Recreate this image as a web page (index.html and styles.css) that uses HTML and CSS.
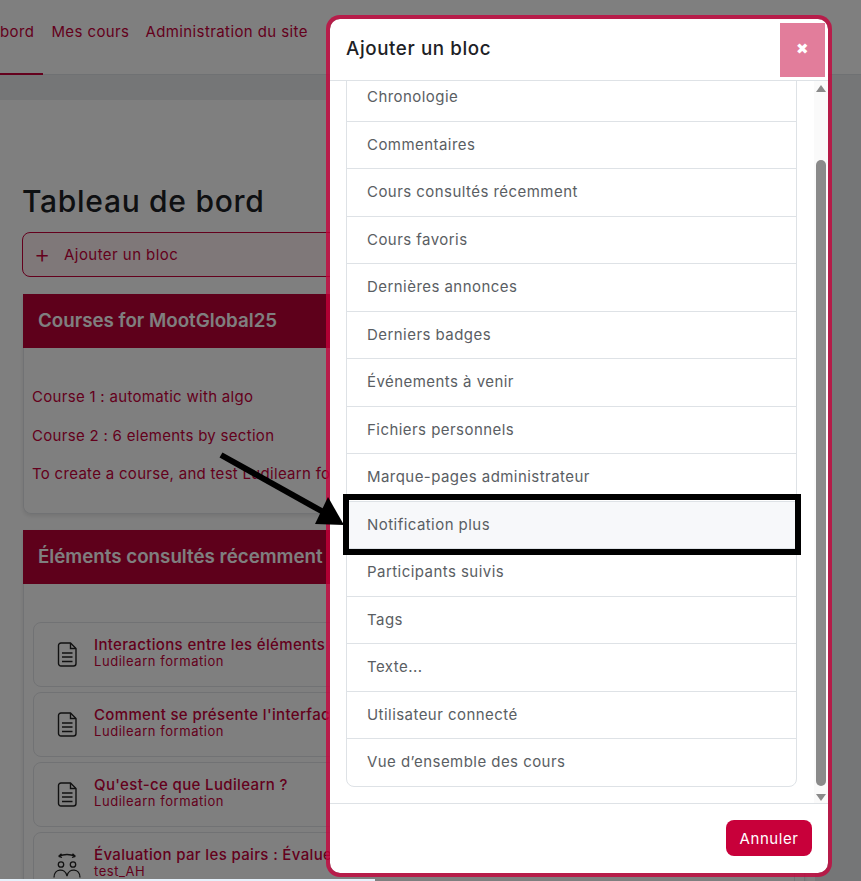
FILE: index.html
```html
<!DOCTYPE html>
<html lang="fr">
<head>
    <meta charset="UTF-8">
    <meta name="viewport" content="width=device-width, initial-scale=1.0">
    <title>Tableau de bord</title>
    <link rel="stylesheet" href="styles.css">
</head>
<body>
<div class="page">
    <nav class="topnav">
        <a class="active">bord</a>
        <a>Mes cours</a>
        <a>Administration du site</a>
    </nav>

    <main class="content">
        <h1>Tableau de bord</h1>
        <div class="add-block"><span class="plus">+</span>Ajouter un bloc</div>

        <section class="card">
            <h2>Courses for MootGlobal25</h2>
            <div class="card-text">
                <p>Course 1 : automatic with algo</p>
                <p>Course 2 : 6 elements by section</p>
                <p>To create a course, and test Ludilearn for</p>
            </div>
        </section>

        <section class="card">
            <h2>Éléments consultés récemment</h2>
            <div class="recent">
                <div class="recent-item">
                    <svg class="doc" viewBox="0 0 20 25"><use href="#doc-icon"/></svg>
                    <div><div class="recent-title">Interactions entre les éléments de jeu</div><div class="recent-sub">Ludilearn formation</div></div>
                </div>
                <div class="recent-item">
                    <svg class="doc" viewBox="0 0 20 25"><use href="#doc-icon"/></svg>
                    <div><div class="recent-title">Comment se présente l'interface</div><div class="recent-sub">Ludilearn formation</div></div>
                </div>
                <div class="recent-item">
                    <svg class="doc" viewBox="0 0 20 25"><use href="#doc-icon"/></svg>
                    <div><div class="recent-title">Qu'est-ce que Ludilearn ?</div><div class="recent-sub">Ludilearn formation</div></div>
                </div>
                <div class="recent-item">
                    <svg class="peers" viewBox="0 0 28 30" fill="none" stroke="#222" stroke-width="1.300">
                        <path d="M5.500 6.500Q14 2.500 22.500 6.500M5.500 6.500l3-2.800M5.500 6.500l3.500 1M22.500 6.500l-3-2.800M22.500 6.500l-3.500 1"/>
                        <circle cx="8" cy="14.500" r="2.700"/>
                        <circle cx="20" cy="14.500" r="2.700"/>
                        <path d="M1 27.500c0-9 11-10 13-1.500 2-8.500 13-7.500 13 1.500"/>
                    </svg>
                    <div><div class="recent-title">Évaluation par les pairs : Évaluer</div><div class="recent-sub">test_AH</div></div>
                </div>
            </div>
        </section>
    </main>
</div>

<svg class="defs" width="0" height="0">
    <symbol id="doc-icon" viewBox="0 0 20 25">
        <path d="M4 1h9.500l5.500 5.500v15a2.500 2.500 0 0 1-2.500 2.500h-12.500a2.500 2.500 0 0 1-2.500-2.500v-18a2.500 2.500 0 0 1 2.500-2.500z" fill="none" stroke="#222" stroke-width="1.400"/>
        <path d="M13.500 1v5.500h5.500M5 11h10.500M5 15h10.500M5 19.500h10.500" fill="none" stroke="#222" stroke-width="1.400"/>
    </symbol>
</svg>

<div class="backdrop"></div>
<div class="status-strip"></div>

<div class="modal">
    <div class="modal-head">
        <h3>Ajouter un bloc</h3>
        <div class="close">&#10006;</div>
    </div>
    <div class="modal-body">
        <ul class="block-list">
            <li>Chronologie</li>
            <li>Commentaires</li>
            <li>Cours consultés récemment</li>
            <li>Cours favoris</li>
            <li>Dernières annonces</li>
            <li>Derniers badges</li>
            <li>Événements à venir</li>
            <li>Fichiers personnels</li>
            <li>Marque-pages administrateur</li>
            <li class="hover">Notification plus</li>
            <li>Participants suivis</li>
            <li>Tags</li>
            <li>Texte...</li>
            <li>Utilisateur connecté</li>
            <li>Vue d’ensemble des cours</li>
        </ul>
        <div class="scrollbar">
            <span class="arrow-up"></span>
            <span class="thumb"></span>
            <span class="arrow-down"></span>
        </div>
    </div>
    <div class="modal-foot">
        <button>Annuler</button>
    </div>
</div>

<!-- annotation on top of the screenshot -->
<div class="highlight"></div>
<svg class="pointer" width="861" height="881" viewBox="0 0 861 881">
    <line x1="221" y1="455" x2="325" y2="513" stroke="#000" stroke-width="6"/>
    <polygon points="328,497 315,524 344,525" fill="#000"/>
</svg>
</body>
</html>
```

FILE: styles.css
```css
* {
    box-sizing: border-box;
}
body {
    margin: 0;
    height: 881px;
    overflow: hidden;
    font-family: Inter, "Open Sans", sans-serif;
    font-size: 15px;
    letter-spacing: 0.55px;
    position: relative;
    background-color: #eaecef;
    color: #c8003a;
}
.defs {
    position: absolute;
}
.topnav {
    display: flex;
    height: 75px;
    background-color: #fff;
    border-bottom: 1px solid #dee2e6;
    letter-spacing: 0.4px;
}
.topnav a {
    padding: 22px 8px 0 8px;
    height: 75px;
    line-height: 20px;
}
.topnav a.active {
    padding: 22px 9px 0 0;
    border-bottom: 2px solid #c8003a;
}
.content {
    width: 815px;
    margin-top: 25px;
    padding: 69px 10px 0 22px;
    background-color: #fff;
}
h1 {
    margin: 0;
    height: 63px;
    padding-top: 14px;
    font-size: 30px;
    line-height: 36px;
    font-weight: 500;
    letter-spacing: 0.7px;
    color: #1d2125;
}
.add-block {
    height: 45px;
    margin-bottom: 17px;
    border: 1px solid #c8003a;
    border-radius: 8px;
    background-color: #fff0f2;
    line-height: 43px;
    padding-left: 11px;
    display: flex;
    letter-spacing: 0.45px;
}
.plus {
    width: 30px;
    font-size: 25px;
    font-weight: 300;
}
.card {
    margin-left: 1px;
    margin-bottom: 16px;
    border: 1px solid #e3e5e8;
    border-top: none;
    border-radius: 0 0 8px 8px;
    box-shadow: 0 2px 4px rgba(0, 0, 0, 0.1);
}
.card h2 {
    margin: 0 -1px;
    height: 54px;
    padding-left: 15px;
    background-color: #bd0036;
    color: #fff;
    font-size: 18.750px;
    line-height: 54px;
    font-weight: 600;
    letter-spacing: 0;
}
.card-text {
    padding: 39px 8px 19px 8px;
    height: 165px;
    letter-spacing: 0.3px;
}
.card-text p {
    margin: 0 0 18.500px 0;
    line-height: 20px;
    white-space: nowrap;
}
.recent {
    padding: 38px 9px 0 9px;
}
.recent-item {
    display: flex;
    align-items: center;
    height: 65px;
    margin-bottom: 5px;
    border: 1px solid #e3e5e8;
    border-radius: 8px;
    padding-left: 23px;
}
.recent-item > div {
    margin-left: 17px;
    padding-bottom: 4px;
}
.doc {
    width: 20px;
    height: 25px;
}
.peers {
    width: 28px;
    height: 30px;
    margin-left: -4px;
    margin-right: -4px;
}
.recent-title {
    font-weight: 500;
    line-height: 17px;
    letter-spacing: 0.35px;
    white-space: nowrap;
}
.recent-sub {
    font-size: 13px;
    line-height: 17px;
}
.backdrop {
    position: absolute;
    inset: 0;
    background-color: rgba(0, 0, 0, 0.5);
}
.status-strip {
    position: absolute;
    left: 0;
    bottom: 0;
    width: 375px;
    height: 2px;
    background-color: #e6f1fb;
}
.modal {
    position: absolute;
    left: 326px;
    top: 15px;
    width: 506px;
    height: 862px;
    display: flex;
    flex-direction: column;
    background-color: #fff;
    background-clip: padding-box;
    border: 4px solid rgba(200, 0, 58, 0.77);
    border-radius: 14px;
}
.modal-head {
    display: flex;
    justify-content: space-between;
    height: 62px;
    flex-shrink: 0;
    padding: 4px 3px 0 16px;
    border-bottom: 1px solid #dee2e6;
}
.modal-head h3 {
    margin: 0;
    font-size: 18.750px;
    font-weight: 500;
    line-height: 52px;
    letter-spacing: 0.6px;
    color: #1d2125;
}
.close {
    width: 45px;
    height: 54px;
    background-color: #e27d9b;
    color: #fff;
    font-size: 15px;
    line-height: 52px;
    text-align: center;
}
.modal-body {
    flex: 1;
    display: flex;
    overflow: hidden;
    padding-left: 16px;
}
.block-list {
    list-style: none;
    width: 451px;
    height: 714px;
    margin: -8px 0 0 0;
    padding: 0;
    border: 1px solid #dee2e6;
    border-radius: 8px;
    color: #5a5e63;
    letter-spacing: 0.45px;
    flex-shrink: 0;
}
.block-list li {
    height: 47.500px;
    padding-left: 20px;
    line-height: 46px;
    border-bottom: 1px solid #dee2e6;
}
.block-list li:last-child {
    border-bottom: none;
}
.block-list li.hover {
    background-color: #f7f8fa;
}
.scrollbar {
    width: 15px;
    margin-left: 17px;
    background-color: #fafafa;
    display: flex;
    flex-direction: column;
    align-items: center;
    padding: 4px 0 2px 0;
}
.arrow-up, .arrow-down {
    width: 0;
    height: 0;
    border-left: 5px solid transparent;
    border-right: 5px solid transparent;
}
.arrow-up {
    border-bottom: 7px solid #8a8a8a;
}
.arrow-down {
    border-top: 7px solid #8a8a8a;
}
.thumb {
    flex: 1;
    width: 10px;
    margin: 68px 0 8px 0;
    background-color: #8a8a8a;
    border-radius: 5px;
}
.modal-foot {
    height: 70px;
    flex-shrink: 0;
    border-top: 1px solid #dee2e6;
    display: flex;
    justify-content: flex-end;
    align-items: flex-start;
    padding: 16px 16px 0 0;
}
.modal-foot button {
    width: 86px;
    height: 36px;
    border: none;
    border-radius: 8px;
    background-color: #c8003a;
    color: #fff;
    font-family: inherit;
    font-size: 15px;
    letter-spacing: 0.55px;
}
.highlight {
    position: absolute;
    left: 343px;
    top: 494px;
    width: 458px;
    height: 61px;
    border: 6px solid #000;
}
.pointer {
    position: absolute;
    left: 0;
    top: 0;
}
```
